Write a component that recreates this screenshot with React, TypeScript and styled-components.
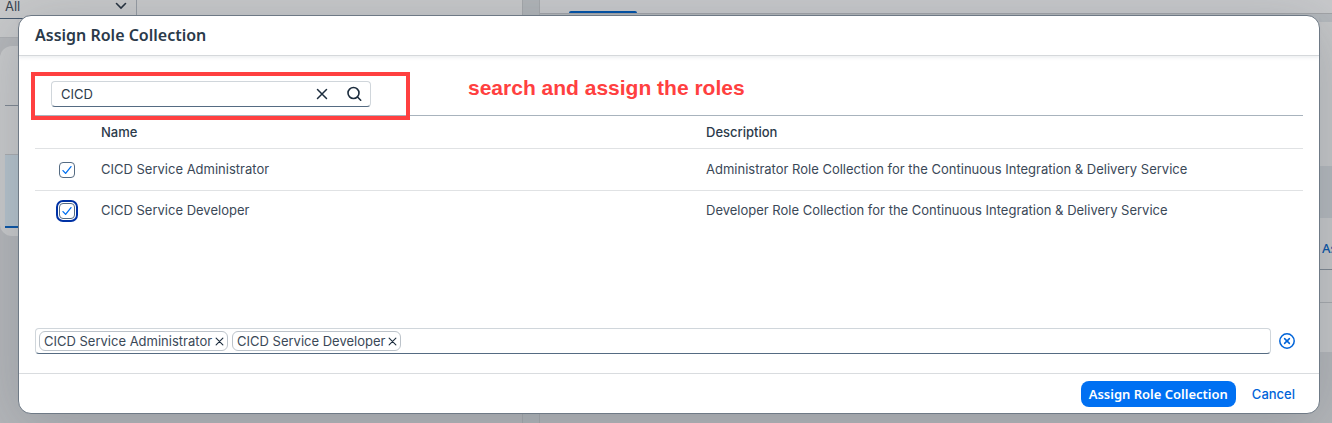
import React, { useState } from "react";
import styled, { createGlobalStyle } from "styled-components";

const GlobalStyle = createGlobalStyle`
  *, *::before, *::after { box-sizing: border-box; }
  body {
    margin: 0;
    background: #b4b6b9;
    color: #2b3a4a;
    font: 13px/18px Inter, "Noto Sans", sans-serif;
  }
  button, input, select { font: inherit; color: inherit; }
`;

const Screen = styled.div`
  position: relative;
  min-height: 100vh;
  overflow: hidden;
`;

/* Page behind the dialog */
const BackPage = styled.div`
  position: absolute;
  inset: 0;
  display: grid;
  grid-template-columns: 522px 18px minmax(0, 1fr);
`;

const Pane = styled.div`
  min-width: 0;
`;

const Splitter = styled.div`
  background: #b1b5b8;
  border-left: 1px solid #a5a8ab;
  border-right: 1px solid #a5a8ab;
`;

const FilterBar = styled.div`
  height: 38px;
  background: #c8c9ca;
  border-bottom: 1px solid #acaeb1;
`;

const FilterField = styled.div`
  display: flex;
  align-items: flex-start;
  width: 137px;
  height: 19px;
  border-right: 1px solid #969ca3;
  border-bottom: 1px solid #45586d;
`;

const FilterSelect = styled.select`
  flex: 1;
  height: 13px;
  padding: 0 0 0 5px;
  border: 0;
  background: none;
  appearance: none;
  line-height: 13px;
  color: #36424e;
`;

const FilterArrow = styled.svg`
  width: 12px;
  height: 12px;
  margin-right: 9px;
`;

const SideCard = styled.div`
  height: 190px;
  margin-top: 8px;
  padding: 59px 0 0 5px;
  border-radius: 12px;
  background: #c8c9ca;
`;

const SideHead = styled.div`
  height: 50px;
  border-top: 1px solid #7e8791;
  border-bottom: 1px solid #aaacaf;
`;

const SideSelected = styled.div`
  height: 73px;
  background: #b5c2cb;
  border-bottom: 2px solid #0854a5;
`;

const TabStrip = styled.div`
  height: 14px;
  padding: 11px 0 0 29px;
  background: #c8c9cb;
  border-bottom: 1px solid #a2a4a7;
`;

const TabMarker = styled.div`
  width: 68px;
  height: 2px;
  border-radius: 2px 2px 0 0;
  background: #0052a8;
`;

const DetailBlock = styled.div<{ $height: number; $dark?: boolean }>`
  height: ${(p) => p.$height}px;
  background: ${(p) => (p.$dark ? "#b4b8bc" : "#c5c6c7")};
`;

const DetailToolbar = styled(DetailBlock)`
  display: flex;
  align-items: center;
  justify-content: flex-end;
  padding-top: 8px;
  border-bottom: 1px solid ${(p) => (p.$height > 40 ? "#7e8791" : "#a6a9ac")};
`;

const DetailAction = styled.button`
  width: 10px;
  padding: 0;
  border: 0;
  background: none;
  color: #0854a5;
  font-family: "Noto Sans", sans-serif;
  font-weight: 500;
  text-align: left;
  white-space: nowrap;
  overflow: hidden;
`;

/* Dialog */
const Dialog = styled.section`
  position: relative;
  margin: 15px 12px 9px 18px;
  border: 1px solid #6f7a86;
  border-radius: 13px;
  background: #fff;
  box-shadow: 0 10px 60px rgba(60, 72, 86, 0.24);
`;

const DialogHeader = styled.header`
  display: flex;
  align-items: center;
  height: 40px;
  padding: 0 16px 2px;
  border-bottom: 1px solid #d5d8db;
  box-shadow: 0 2px 3px rgba(85, 107, 129, 0.1);
`;

const DialogTitle = styled.h1`
  margin: 0;
  font: 600 16px/20px "Noto Sans", sans-serif;
`;

const DialogBody = styled.div`
  padding: 0 16px 19px;
`;

const SearchBar = styled.div`
  position: relative;
  display: flex;
  align-items: center;
  height: 60px;
  padding: 16px 16px 0;
  border-bottom: 1px solid #a8b3bd;
`;

const SearchField = styled.div`
  display: flex;
  align-items: center;
  width: 320px;
  height: 26px;
  border: 1px solid #d0d6db;
  border-bottom-color: #556b82;
  border-radius: 4px;
`;

const SearchInput = styled.input`
  flex: 1;
  min-width: 0;
  padding: 0 9px;
  border: 0;
  outline: 0;
  background: none;
`;

const IconButton = styled.button<{ $size: number; $tone?: string }>`
  display: flex;
  flex: none;
  align-items: center;
  justify-content: center;
  width: ${(p) => p.$size}px;
  height: ${(p) => Math.min(p.$size, 24)}px;
  padding: 0;
  border: 0;
  background: none;
  color: ${(p) => p.$tone ?? "#1d2d3e"};
`;

const Highlight = styled.div`
  position: absolute;
  top: 16px;
  left: -4px;
  width: 379px;
  height: 48px;
  border: 4px solid #ff4040;
  pointer-events: none;
`;

const Note = styled.p`
  margin: 0 0 0 97px;
  padding-bottom: 12px;
  color: #ff4040;
  font: bold 21px/24px "Liberation Sans", sans-serif;
`;

const RoleTable = styled.table`
  width: 100%;
  border-collapse: separate;
  border-spacing: 0;
  table-layout: fixed;
`;

const HeadCell = styled.th<{ $width?: number }>`
  width: ${(p) => (p.$width ? `${p.$width}px` : "auto")};
  height: 32px;
  padding: 0 8px;
  font-weight: 500;
  text-align: left;
`;

const Cell = styled.td`
  height: 42px;
  padding: 0 8px 2px;
  border-top: 1px solid #e0e2e4;
  color: #3a4857;
  tr:last-child > & { height: 40px; }
`;

const CheckCell = styled(Cell)`
  padding: 0 0 0 24px;
`;

const Check = styled.input<{ $focused?: boolean }>`
  display: block;
  width: 16px;
  height: 16px;
  margin: 0;
  appearance: none;
  border: 1px solid #556b82;
  border-radius: 4px;
  outline: ${(p) => (p.$focused ? "2px solid #0032a5" : "none")};
  outline-offset: 1px;
  &:checked {
    background: center / 14px 14px no-repeat
      url("data:image/svg+xml,%3Csvg xmlns='http://www.w3.org/2000/svg' viewBox='0 0 14 14'%3E%3Cpath d='M3 7.6 5.6 10.4 11 3.6' fill='none' stroke='%230070f2' stroke-width='1.3' stroke-linecap='round' stroke-linejoin='round'/%3E%3C/svg%3E");
  }
`;

const TokenLine = styled.div`
  display: flex;
  align-items: center;
  gap: 8px;
  margin-top: 98px;
  padding-right: 8px;
`;

const TokenField = styled.div`
  display: flex;
  flex: 1;
  align-items: center;
  gap: 4px;
  height: 26px;
  padding: 0 3px;
  border: 1px solid #d0d6db;
  border-bottom-color: #556b82;
  border-radius: 4px;
`;

const Token = styled.span`
  display: flex;
  align-items: center;
  height: 20px;
  padding: 0 1px 0 4px;
  border: 1px solid #bcc3ca;
  border-radius: 6px;
  color: #3a4857;
`;

const DialogFooter = styled.footer`
  display: flex;
  align-items: center;
  justify-content: flex-end;
  gap: 8px;
  height: 40px;
  padding: 0 16px;
  border-top: 1px solid #d9dcdf;
`;

const ActionButton = styled.button<{ $primary?: boolean }>`
  height: 26px;
  padding: 0 8px;
  border: 0;
  border-radius: 8px;
  background: ${(p) => (p.$primary ? "#0070f2" : "none")};
  color: ${(p) => (p.$primary ? "#fff" : "#0064d9")};
  font-family: ${(p) => (p.$primary ? '"Noto Sans", sans-serif' : "inherit")};
  font-weight: ${(p) => (p.$primary ? 600 : 500)};
  white-space: nowrap;
`;

const Cross = ({ size }: { size: number }) => (
  <svg width={size} height={size} viewBox="0 0 12 12" fill="none" stroke="currentColor" strokeWidth="1.5" strokeLinecap="round" aria-hidden="true">
    <path d="M1.5 1.5l9 9M10.500 1.5l-9 9" />
  </svg>
);

const Magnifier = () => (
  <svg width="16" height="16" viewBox="0 0 16 16" fill="none" stroke="currentColor" strokeWidth="1.6" strokeLinecap="round" aria-hidden="true">
    <circle cx="7.500" cy="7" r="5.500" />
    <path d="M11.500 11l3.200 3.200" />
  </svg>
);

const CircledCross = () => (
  <svg width="16" height="16" viewBox="0 0 16 16" fill="none" stroke="currentColor" strokeWidth="1.5" strokeLinecap="round" aria-hidden="true">
    <circle cx="8" cy="8" r="7.2" />
    <path d="M5.6 5.6l4.8 4.8M10.4 5.6l-4.8 4.8" />
  </svg>
);

const roles = [
  {
    name: "CICD Service Administrator",
    description: "Administrator Role Collection for the Continuous Integration & Delivery Service",
  },
  {
    name: "CICD Service Developer",
    description: "Developer Role Collection for the Continuous Integration & Delivery Service",
  },
];

export default function App() {
  const [query, setQuery] = useState("CICD");
  const [selected, setSelected] = useState(roles.map((r) => r.name));

  const toggle = (name: string) =>
    setSelected((now) => (now.includes(name) ? now.filter((n) => n !== name) : [...now, name]));

  return (
    <Screen>
      <GlobalStyle />
      <BackPage>
        <Pane>
          <FilterBar>
            <FilterField>
              <FilterSelect aria-label="Filter" defaultValue="All">
                <option>All</option>
              </FilterSelect>
              <FilterArrow viewBox="0 0 12 12" fill="none" stroke="#26323f" strokeWidth="1.6" strokeLinecap="round" aria-hidden="true">
                <path d="M1.500 3.500L6 8l4.500-4.500" />
              </FilterArrow>
            </FilterField>
          </FilterBar>
          <SideCard>
            <SideHead />
            <SideSelected />
          </SideCard>
        </Pane>
        <Splitter />
        <Pane>
          <TabStrip>
            <TabMarker />
          </TabStrip>
          <DetailBlock $height={8} $dark />
          <DetailBlock $height={144} />
          <DetailBlock $height={52} $dark />
          <DetailToolbar $height={52}>
            <DetailAction type="button">As</DetailAction>
          </DetailToolbar>
          <DetailToolbar $height={33} />
          <DetailBlock $height={49} />
        </Pane>
      </BackPage>

      <Dialog role="dialog" aria-labelledby="dialog-title">
        <DialogHeader>
          <DialogTitle id="dialog-title">Assign Role Collection</DialogTitle>
        </DialogHeader>
        <DialogBody>
          <SearchBar>
            <SearchField>
              <SearchInput aria-label="Search" value={query} onChange={(e) => setQuery(e.target.value)} />
              <IconButton type="button" $size={32} aria-label="Clear search" onClick={() => setQuery("")}>
                <Cross size={12} />
              </IconButton>
              <IconButton type="button" $size={32} aria-label="Search">
                <Magnifier />
              </IconButton>
            </SearchField>
            <Note>search and assign the roles</Note>
            <Highlight />
          </SearchBar>

          <RoleTable>
            <thead>
              <tr>
                <HeadCell $width={58} aria-label="Selection" />
                <HeadCell>Name</HeadCell>
                <HeadCell>Description</HeadCell>
              </tr>
            </thead>
            <tbody>
              {roles.map((role, i) => (
                <tr key={role.name}>
                  <CheckCell>
                    <Check
                      type="checkbox"
                      aria-label={role.name}
                      checked={selected.includes(role.name)}
                      onChange={() => toggle(role.name)}
                      $focused={i === 1}
                    />
                  </CheckCell>
                  <Cell>{role.name}</Cell>
                  <Cell>{role.description}</Cell>
                </tr>
              ))}
            </tbody>
          </RoleTable>

          <TokenLine>
            <TokenField>
              {selected.map((name) => (
                <Token key={name}>
                  {name}
                  <IconButton type="button" $size={14} aria-label={`Remove ${name}`} onClick={() => toggle(name)}>
                    <Cross size={9} />
                  </IconButton>
                </Token>
              ))}
            </TokenField>
            <IconButton type="button" $size={16} $tone="#0064d9" aria-label="Remove all" onClick={() => setSelected([])}>
              <CircledCross />
            </IconButton>
          </TokenLine>
        </DialogBody>
        <DialogFooter>
          <ActionButton type="button" $primary>Assign Role Collection</ActionButton>
          <ActionButton type="button">Cancel</ActionButton>
        </DialogFooter>
      </Dialog>
    </Screen>
  );
}
